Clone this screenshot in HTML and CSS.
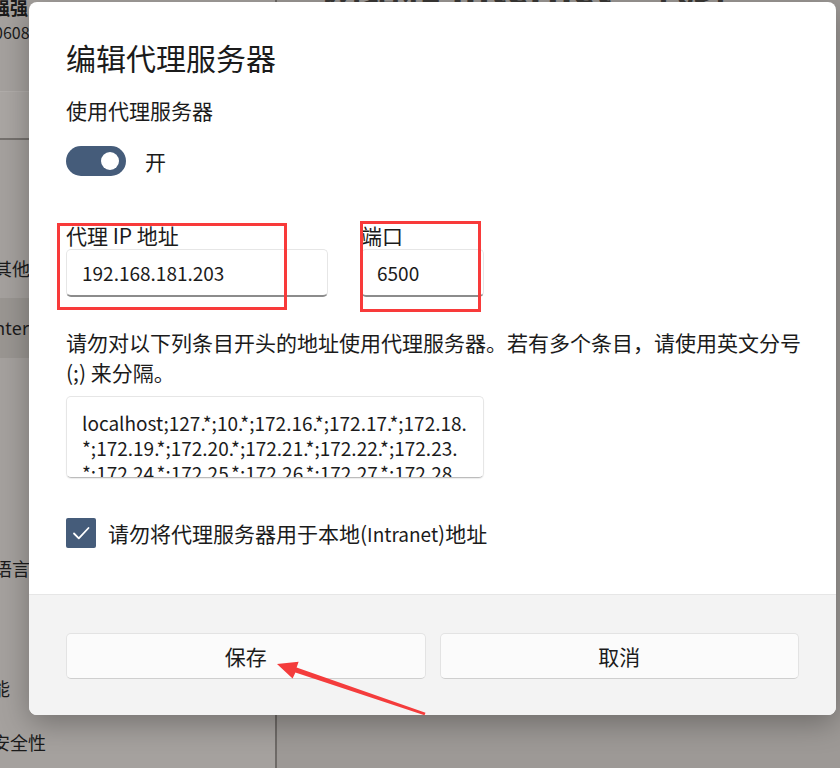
FILE: index.html
```html
<!DOCTYPE html>
<html lang="zh-CN">

<head>
  <meta charset="UTF-8" />
  <title>编辑代理服务器</title>
  <link rel="stylesheet" href="styles.css">
</head>

<body>
  <!-- 背景中的设置窗口 -->
  <div class="window">
    <div class="nav">
      <div class="nav-user">
        <div class="nav-name">强强</div>
        <div class="nav-id">0608</div>
      </div>
      <div class="nav-search"></div>
      <div class="nav-list">
        <div class="nav-item"><span>其他</span></div>
        <div class="nav-item active net"><span>Internet</span></div>
        <div class="nav-item"><span></span></div>
        <div class="nav-item"><span></span></div>
        <div class="nav-item"><span></span></div>
        <div class="nav-item"><span>语言</span></div>
        <div class="nav-item"><span></span></div>
        <div class="nav-item cut"><span>节能</span></div>
        <div class="nav-item last"><span>安全性</span></div>
      </div>
    </div>
    <div class="main">
      <h1 class="page-title">网络和 Internet &gt; 代理</h1>
    </div>
  </div>

  <!-- 编辑代理服务器对话框 -->
  <div class="dialog">
    <div class="dialog-body">
      <h2 class="dialog-title">编辑代理服务器</h2>
      <div class="field-label">使用代理服务器</div>
      <div class="toggle-row">
        <div class="toggle"><span class="knob"></span></div>
        <span>开</span>
      </div>

      <div class="field-row">
        <div class="field">
          <div class="field-label">代理 IP 地址</div>
          <div class="input ip">192.168.181.203</div>
        </div>
        <div class="field">
          <div class="field-label">端口</div>
          <div class="input port">6500</div>
        </div>
      </div>

      <p class="desc">请勿对以下列条目开头的地址使用代理服务器。若有多个条目，请使用英文分号 (;) 来分隔。</p>
      <div class="textbox">
        <div>localhost;127.*;10.*;172.16.*;172.17.*;172.18.</div>
        <div>*;172.19.*;172.20.*;172.21.*;172.22.*;172.23.</div>
        <div>*;172.24.*;172.25.*;172.26.*;172.27.*;172.28.</div>
      </div>

      <label class="check-row">
        <span class="checkbox">
          <svg width="30" height="30" viewBox="0 0 30 30">
            <path d="M8 15.5 L12.8 20.3 L22.5 10" fill="none" stroke="#ffffff" stroke-width="1.8" stroke-linecap="round" stroke-linejoin="round" />
          </svg>
        </span>
        <span>请勿将代理服务器用于本地(<span class="latin">Intranet</span>)地址</span>
      </label>
    </div>
    <div class="dialog-footer">
      <button class="btn">保存</button>
      <button class="btn">取消</button>
    </div>
  </div>

  <!-- 红色标注 -->
  <svg class="marks" width="840" height="768" viewBox="0 0 840 768">
    <rect x="58.5" y="224.5" width="227" height="84" fill="none" stroke="#f83a3a" stroke-width="3" />
    <rect x="361.5" y="222.5" width="118" height="88" fill="none" stroke="#f83a3a" stroke-width="3" />
    <polygon points="277,664 298.6,661.8 296.6,667.6 425.5,712.8 424.5,715.2 295.4,672.6 292.6,678.5" fill="#f43c3c" />
  </svg>
</body>

</html>
```

FILE: styles.css
```css
body {
  margin: 0;
  width: 840px;
  height: 768px;
  overflow: hidden;
  position: relative;
  background-color: #9d9996;
  color: #1b1b1b;
  font-family: "Noto Sans CJK SC", "Noto Sans", sans-serif;
}

/* 背景窗口 */
.window {
  display: flex;
  height: 768px;
}

.nav {
  width: 275px;
  background-color: #a5a19e;
  border-right: 2px solid #6e6a67;
  font-size: 18px;
}

.nav-user {
  height: 97px;
}

.nav-name {
  margin-top: -6px;
  margin-left: -8px;
  font-weight: 700;
  line-height: 26px;
}

.nav-id {
  margin-left: -6px;
  font-size: 16px;
  line-height: 24px;
}

.nav-search {
  height: 46px;
  background-color: #aaa6a3;
  border-top: 1px solid #b1adaa;
  border-bottom: 2px solid #75716e;
}

.nav-list {
  padding-top: 98px;
}

.nav-item {
  height: 60px;
  display: flex;
  align-items: center;
}

.nav-item span {
  margin-left: -6px;
}

.nav-item.net span {
  margin-left: -12px;
  font-family: "Noto Sans", sans-serif;
}

.nav-item.cut span {
  margin-left: -26px;
}

.nav-item.active {
  background-color: #9a9692;
}

.nav-item.last {
  height: 48px;
}

.nav-item.last span {
  margin-left: -8px;
}

.main {
  flex: 1;
}

.page-title {
  margin: -37px 0 0 45px;
  font-size: 40px;
  font-weight: 600;
  line-height: 48px;
  color: #3a3836;
}

/* 对话框 */
.dialog {
  position: absolute;
  left: 29px;
  top: 2px;
  width: 807px;
  height: 713px;
  background-color: #ffffff;
  border-radius: 8px;
  overflow: hidden;
  display: flex;
  flex-direction: column;
  box-shadow: 0 8px 30px rgba(0, 0, 0, 0.3);
}

.dialog-body {
  flex: 1;
  padding: 35px 30px 0 37px;
  font-size: 21px;
}

.dialog-title {
  margin: 0 0 19px;
  font-size: 30px;
  font-weight: 400;
  line-height: 40px;
}

.field-label {
  line-height: 28px;
}

.toggle-row {
  display: flex;
  align-items: center;
  gap: 19px;
  margin-top: 22px;
  height: 30px;
}

.toggle {
  width: 60px;
  height: 30px;
  border-radius: 15px;
  background-color: #455c7a;
  display: flex;
  align-items: center;
  justify-content: flex-end;
  padding-right: 7px;
  box-sizing: border-box;
}

.knob {
  width: 18px;
  height: 18px;
  border-radius: 50%;
  background-color: #ffffff;
}

.field-row {
  display: flex;
  gap: 33px;
  margin-top: 45px;
}

.input {
  height: 48px;
  box-sizing: border-box;
  border: 1px solid #e6e6e6;
  border-bottom: 2px solid #8c8c8c;
  border-radius: 5px;
  padding-left: 15px;
  display: flex;
  align-items: center;
  font-size: 19px;
}

.input.ip {
  width: 262px;
}

.input.port {
  width: 123px;
}

.desc {
  margin: 30px 0 0;
  line-height: 30px;
}

.textbox {
  margin-top: 9px;
  width: 418px;
  height: 82px;
  box-sizing: border-box;
  border: 1px solid #e6e6e6;
  border-bottom: 1px solid #bcbcbc;
  border-radius: 5px;
  padding: 13px 0 0 15px;
  line-height: 25px;
  overflow: hidden;
  white-space: nowrap;
  font-size: 19px;
  box-shadow: 0 1px 1px rgba(0, 0, 0, 0.08);
}

.check-row {
  display: flex;
  align-items: center;
  gap: 12px;
  margin-top: 40px;
}

.latin {
  font-size: 19px;
}

.checkbox {
  width: 30px;
  height: 30px;
  background-color: #455c7a;
  border-radius: 2px;
  display: flex;
}

.dialog-footer {
  height: 121px;
  background-color: #f3f3f3;
  border-top: 1px solid #e6e6e6;
  padding: 38px 37px 0;
  box-sizing: border-box;
  display: flex;
  gap: 14px;
}

.btn {
  flex: 1;
  height: 46px;
  background-color: #fbfbfb;
  border: 1px solid #e3e3e3;
  border-bottom-color: #cfcfcf;
  border-radius: 5px;
  font-family: "Noto Sans CJK SC", sans-serif;
  font-size: 21px;
  color: #1b1b1b;
  cursor: pointer;
}

/* 标注层 */
.marks {
  position: absolute;
  left: 0;
  top: 0;
  pointer-events: none;
}
```
